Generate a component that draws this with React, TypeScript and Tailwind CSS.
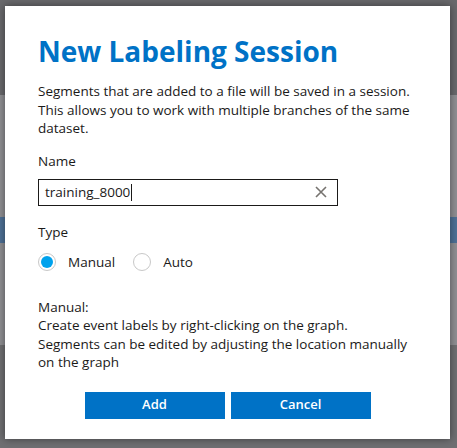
import React from 'react'

function Radio({ checked, label }: { checked: boolean; label: string }) {
  return (
    <label className="flex items-center gap-[12px]">
      <span
        className={
          checked
            ? 'flex h-[18px] w-[18px] items-center justify-center rounded-full border border-[#c8c8c8] bg-white'
            : 'h-[18px] w-[18px] rounded-full border border-[#c8c8c8] bg-white'
        }
      >
        {checked && <span className="h-[12px] w-[12px] rounded-full bg-[#00a2ed]" />}
      </span>
      <span>{label}</span>
    </label>
  )
}

export default function App() {
  return (
    <div
      className="relative h-[448px] w-[457px] overflow-hidden text-[#1b1a19]"
      style={{ fontFamily: '"Open Sans", "Noto Sans", sans-serif' }}
    >
      {/* dimmed page behind the dialog */}
      <div className="flex h-full flex-col">
        <div className="h-[95px] bg-[#69696c]" />
        <div className="h-[122px] bg-[#8f8f93]" />
        <div className="h-[26px] bg-[#4e7196]" />
        <div className="h-[102px] bg-[#8f8f93]" />
        <div className="flex-1 bg-[#6f6f72]" />
      </div>

      {/* dialog */}
      <div className="absolute left-[5px] top-[6px] flex h-[433px] w-[445px] flex-col bg-white pl-[33px] pr-[40px] pt-[25px] shadow-[0_0_8px_rgba(0,0,0,0.45)]">
        <h1 className="text-[28px] font-bold leading-[40px] text-[#0072c6]">New Labeling Session</h1>

        <p className="mt-[11px] text-[13.5px] leading-[18.5px]">
          Segments that are added to a file will be saved in a session. This allows you to work with multiple
          branches of the same dataset.
        </p>

        <div className="mt-[14px] text-[13.5px] leading-[18px]">Name</div>
        <div className="mt-[9px] flex h-[27px] w-[300px] items-center border border-[#1b1a19] pl-[6px] pr-[8px] text-[13.5px]">
          <span>training_8000</span>
          <span className="ml-[1px] h-[17px] w-px bg-[#1b1a19]" />
          <span className="ml-auto flex h-[16px] w-[16px] items-center justify-center">
            <svg width="12" height="12" viewBox="0 0 12 12">
              <path d="M1 1 L11 11 M11 1 L1 11" stroke="#76736f" strokeWidth="1.6" />
            </svg>
          </span>
        </div>

        <div className="mt-[17px] text-[13.5px] leading-[18px]">Type</div>
        <div className="mt-[12px] flex items-center gap-[18px] text-[13.5px] leading-[18px]">
          <Radio checked label="Manual" />
          <Radio checked={false} label="Auto" />
        </div>

        <div className="mt-[27px] text-[13.5px] leading-[18.5px]">
          <div>Manual:</div>
          <div>Create event labels by right-clicking on the graph.</div>
          <div>Segments can be edited by adjusting the location manually on the graph</div>
        </div>

        <div className="mt-[20px] flex justify-center gap-[6px] pl-[7px]">
          <button className="h-[27px] w-[140px] bg-[#0072c6] text-[13px] font-semibold text-white">Add</button>
          <button className="h-[27px] w-[140px] bg-[#0072c6] text-[13px] font-semibold text-white">Cancel</button>
        </div>
      </div>
    </div>
  )
}
